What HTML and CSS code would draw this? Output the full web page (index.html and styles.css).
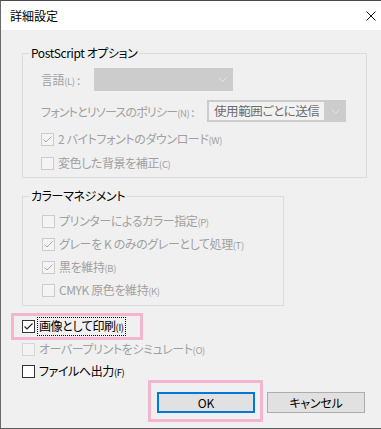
FILE: index.html
```html
<!DOCTYPE html>
<html lang="ja">
<head>
<meta charset="utf-8">
<title>詳細設定</title>
<link rel="stylesheet" href="styles.css">
</head>
<body>
<div class="window">
  <div class="titlebar">
    <span class="title">詳細設定</span>
    <svg class="close" width="10" height="10" viewBox="0 0 10 10"><path d="M0.5 0.5 L9.5 9.5 M9.5 0.5 L0.5 9.5" stroke="#111" stroke-width="1" fill="none"/></svg>
  </div>
  <div class="content">
    <fieldset class="group group-ps">
      <legend>PostScript オプション</legend>
      <div class="group-body body-ps">
        <div class="field-row row-lang">
          <span class="label label-lang disabled">言語<span class="acc">(L)</span> :</span>
          <div class="select">
            <span class="select-value empty"></span>
            <svg class="chev" width="9" height="5" viewBox="0 0 9 5"><polyline points="0.5,0.5 4.5,4.5 8.5,0.5" fill="none" stroke="#e4e4e4" stroke-width="1"/></svg>
          </div>
        </div>
        <div class="field-row row-policy">
          <span class="label label-policy disabled">フォントとリソースのポリシー<span class="acc">(N)</span> :</span>
          <div class="select">
            <span class="select-value">使用範囲ごとに送信</span>
            <svg class="chev" width="9" height="5" viewBox="0 0 9 5"><polyline points="0.5,0.5 4.5,4.5 8.5,0.5" fill="none" stroke="#e4e4e4" stroke-width="1"/></svg>
          </div>
        </div>
        <div class="check-row disabled">
          <span class="cb cb-disabled"><svg width="11" height="11" viewBox="0 0 11 11"><polyline points="1.5,5.5 4,8 9.5,2.5" fill="none" stroke="#a8a8a8" stroke-width="1"/></svg></span>
          <span class="text">2 バイトフォントのダウンロード<span class="acc">(W)</span></span>
        </div>
        <div class="check-row disabled">
          <span class="cb cb-disabled"></span>
          <span class="text">変色した背景を補正<span class="acc">(C)</span></span>
        </div>
      </div>
    </fieldset>

    <fieldset class="group group-cm">
      <legend>カラーマネジメント</legend>
      <div class="group-body body-cm">
        <div class="check-row cm-row disabled">
          <span class="cb cb-disabled"></span>
          <span class="text">プリンターによるカラー指定<span class="acc">(P)</span></span>
        </div>
        <div class="check-row cm-row disabled">
          <span class="cb cb-disabled"><svg width="11" height="11" viewBox="0 0 11 11"><polyline points="1.5,5.5 4,8 9.5,2.5" fill="none" stroke="#a8a8a8" stroke-width="1"/></svg></span>
          <span class="text">グレーを K のみのグレーとして処理<span class="acc">(T)</span></span>
        </div>
        <div class="check-row cm-row disabled">
          <span class="cb cb-disabled"><svg width="11" height="11" viewBox="0 0 11 11"><polyline points="1.5,5.5 4,8 9.5,2.5" fill="none" stroke="#a8a8a8" stroke-width="1"/></svg></span>
          <span class="text">黒を維持<span class="acc">(B)</span></span>
        </div>
        <div class="check-row cm-row disabled">
          <span class="cb cb-disabled"></span>
          <span class="text">CMYK 原色を維持<span class="acc">(K)</span></span>
        </div>
      </div>
    </fieldset>

    <div class="check-row highlight">
      <span class="cb"><svg width="11" height="11" viewBox="0 0 11 11"><polyline points="1.5,5.5 4,8 9.5,2.5" fill="none" stroke="#222" stroke-width="1.1"/></svg></span>
      <span class="text focus">画像として印刷<span class="acc">(I)</span></span>
    </div>
    <div class="check-row row-overprint disabled">
      <span class="cb cb-faint"></span>
      <span class="text">オーバープリントをシミュレート<span class="acc">(O)</span></span>
    </div>
    <div class="check-row row-file">
      <span class="cb"></span>
      <span class="text">ファイルへ出力<span class="acc">(F)</span></span>
    </div>

    <div class="buttons">
      <div class="ok-mark">
        <button class="btn btn-default">OK</button>
      </div>
      <button class="btn btn-cancel">キャンセル</button>
    </div>
  </div>
</div>
</body>
</html>
```

FILE: styles.css
```css
* {
  box-sizing: border-box;
}

html, body {
  margin: 0;
  padding: 0;
}

body {
  width: 381px;
  height: 429px;
  overflow: hidden;
  background: #ffffff;
  font-family: "Noto Sans CJK JP", "Noto Sans", sans-serif;
  font-feature-settings: "palt";
  font-size: 12px;
  letter-spacing: -0.4px;
  color: #000;
}

.window {
  width: 381px;
  height: 429px;
  display: flex;
  flex-direction: column;
  background: #f0f0f0;
  border-top: 1px solid #4a4a4a;
  border-left: 1px solid #6a6a6a;
  border-bottom: 1px solid #5a5a5a;
}

.titlebar {
  height: 29px;
  flex: none;
  background: #ffffff;
  display: flex;
  align-items: center;
  justify-content: space-between;
  padding: 0 5px 0 9px;
}

.title {
  font-size: 12px;
  line-height: 16px;
  letter-spacing: 0;
}

.close {
  display: block;
}

.content {
  flex: 1;
  display: flex;
  flex-direction: column;
  align-items: flex-start;
  padding: 15px 16px 0 21px;
}

.group {
  margin: 0;
  padding: 0;
  min-width: 0;
  border: 1px solid #dcdcdc;
}

.group legend {
  margin-left: 6px;
  padding: 0 2px;
  line-height: 16px;
  font-size: 12px;
  color: #000;
}

.group-ps {
  width: 345px;
}

.group-cm {
  width: 262px;
  margin-top: 10px;
}

.body-ps {
  padding: 7px 0 2px 18px;
}

.body-cm {
  padding: 6px 0 3px 19px;
}

.disabled {
  color: #a0a0a0;
}

.acc {
  font-size: 9.5px;
  letter-spacing: -0.4px;
}

.field-row {
  display: flex;
  align-items: center;
}

.row-lang {
  height: 23px;
}

.row-policy {
  height: 22px;
  margin-top: 9px;
  margin-bottom: 5px;
}

.label-lang {
  width: 53px;
}

.label-policy {
  width: 166px;
  letter-spacing: -0.8px;
}

.select {
  width: 139px;
  height: 100%;
  background: #cccccc;
  display: flex;
  align-items: center;
  padding: 2px 6px 2px 2px;
}

.select-value {
  flex: 1;
  height: 100%;
  line-height: 18px;
  padding-left: 5px;
  color: #6d6d6d;
  font-size: 12.5px;
  letter-spacing: -0.4px;
  background: #f2f2f2;
  margin-right: 7px;
}

.select-value.empty {
  background: transparent;
}

.chev {
  display: block;
  flex: none;
}

.check-row {
  display: flex;
  align-items: center;
  gap: 4px;
  height: 24px;
}

.cm-row {
  height: 23px;
}

.cb {
  width: 13px;
  height: 13px;
  flex: none;
  border: 1px solid #333333;
  background: #ffffff;
  display: flex;
  align-items: center;
  justify-content: center;
}

.cb svg {
  display: block;
}

.cb-disabled {
  border-color: #cccccc;
  background: #f4f4f4;
}

.cb-faint {
  border-color: #d6d6d6;
  background: #f3f3f3;
}

.text {
  line-height: 16px;
  white-space: nowrap;
}

.highlight {
  width: 132px;
  height: 27px;
  margin-top: 7px;
  margin-left: -11px;
  padding: 0 8px;
  border: 3px solid #f3b6cf;
  gap: 3px;
}

.focus {
  outline: 1px dotted #000;
  padding: 0 1px;
}

.row-overprint {
  height: 18px;
}

.row-file {
  height: 22px;
  margin-top: 2px;
}

.buttons {
  align-self: stretch;
  display: flex;
  justify-content: flex-end;
  align-items: flex-start;
  gap: 4px;
  margin-top: -2px;
}

.ok-mark {
  width: 115px;
  height: 42px;
  border: 3px solid #f3b6cf;
  padding: 9px 5px 6px 6px;
}

.btn {
  width: 98px;
  height: 21px;
  margin: 0;
  padding: 0;
  background: #e1e1e1;
  font-family: "Noto Sans CJK JP", "Noto Sans", sans-serif;
  font-feature-settings: "palt";
  font-size: 12px;
  line-height: 16px;
  letter-spacing: -0.2px;
  color: #000;
}

.btn-default {
  border: 2px solid #0078d7;
}

.btn-cancel {
  margin-top: 12px;
  border: 1px solid #adadad;
}
```
